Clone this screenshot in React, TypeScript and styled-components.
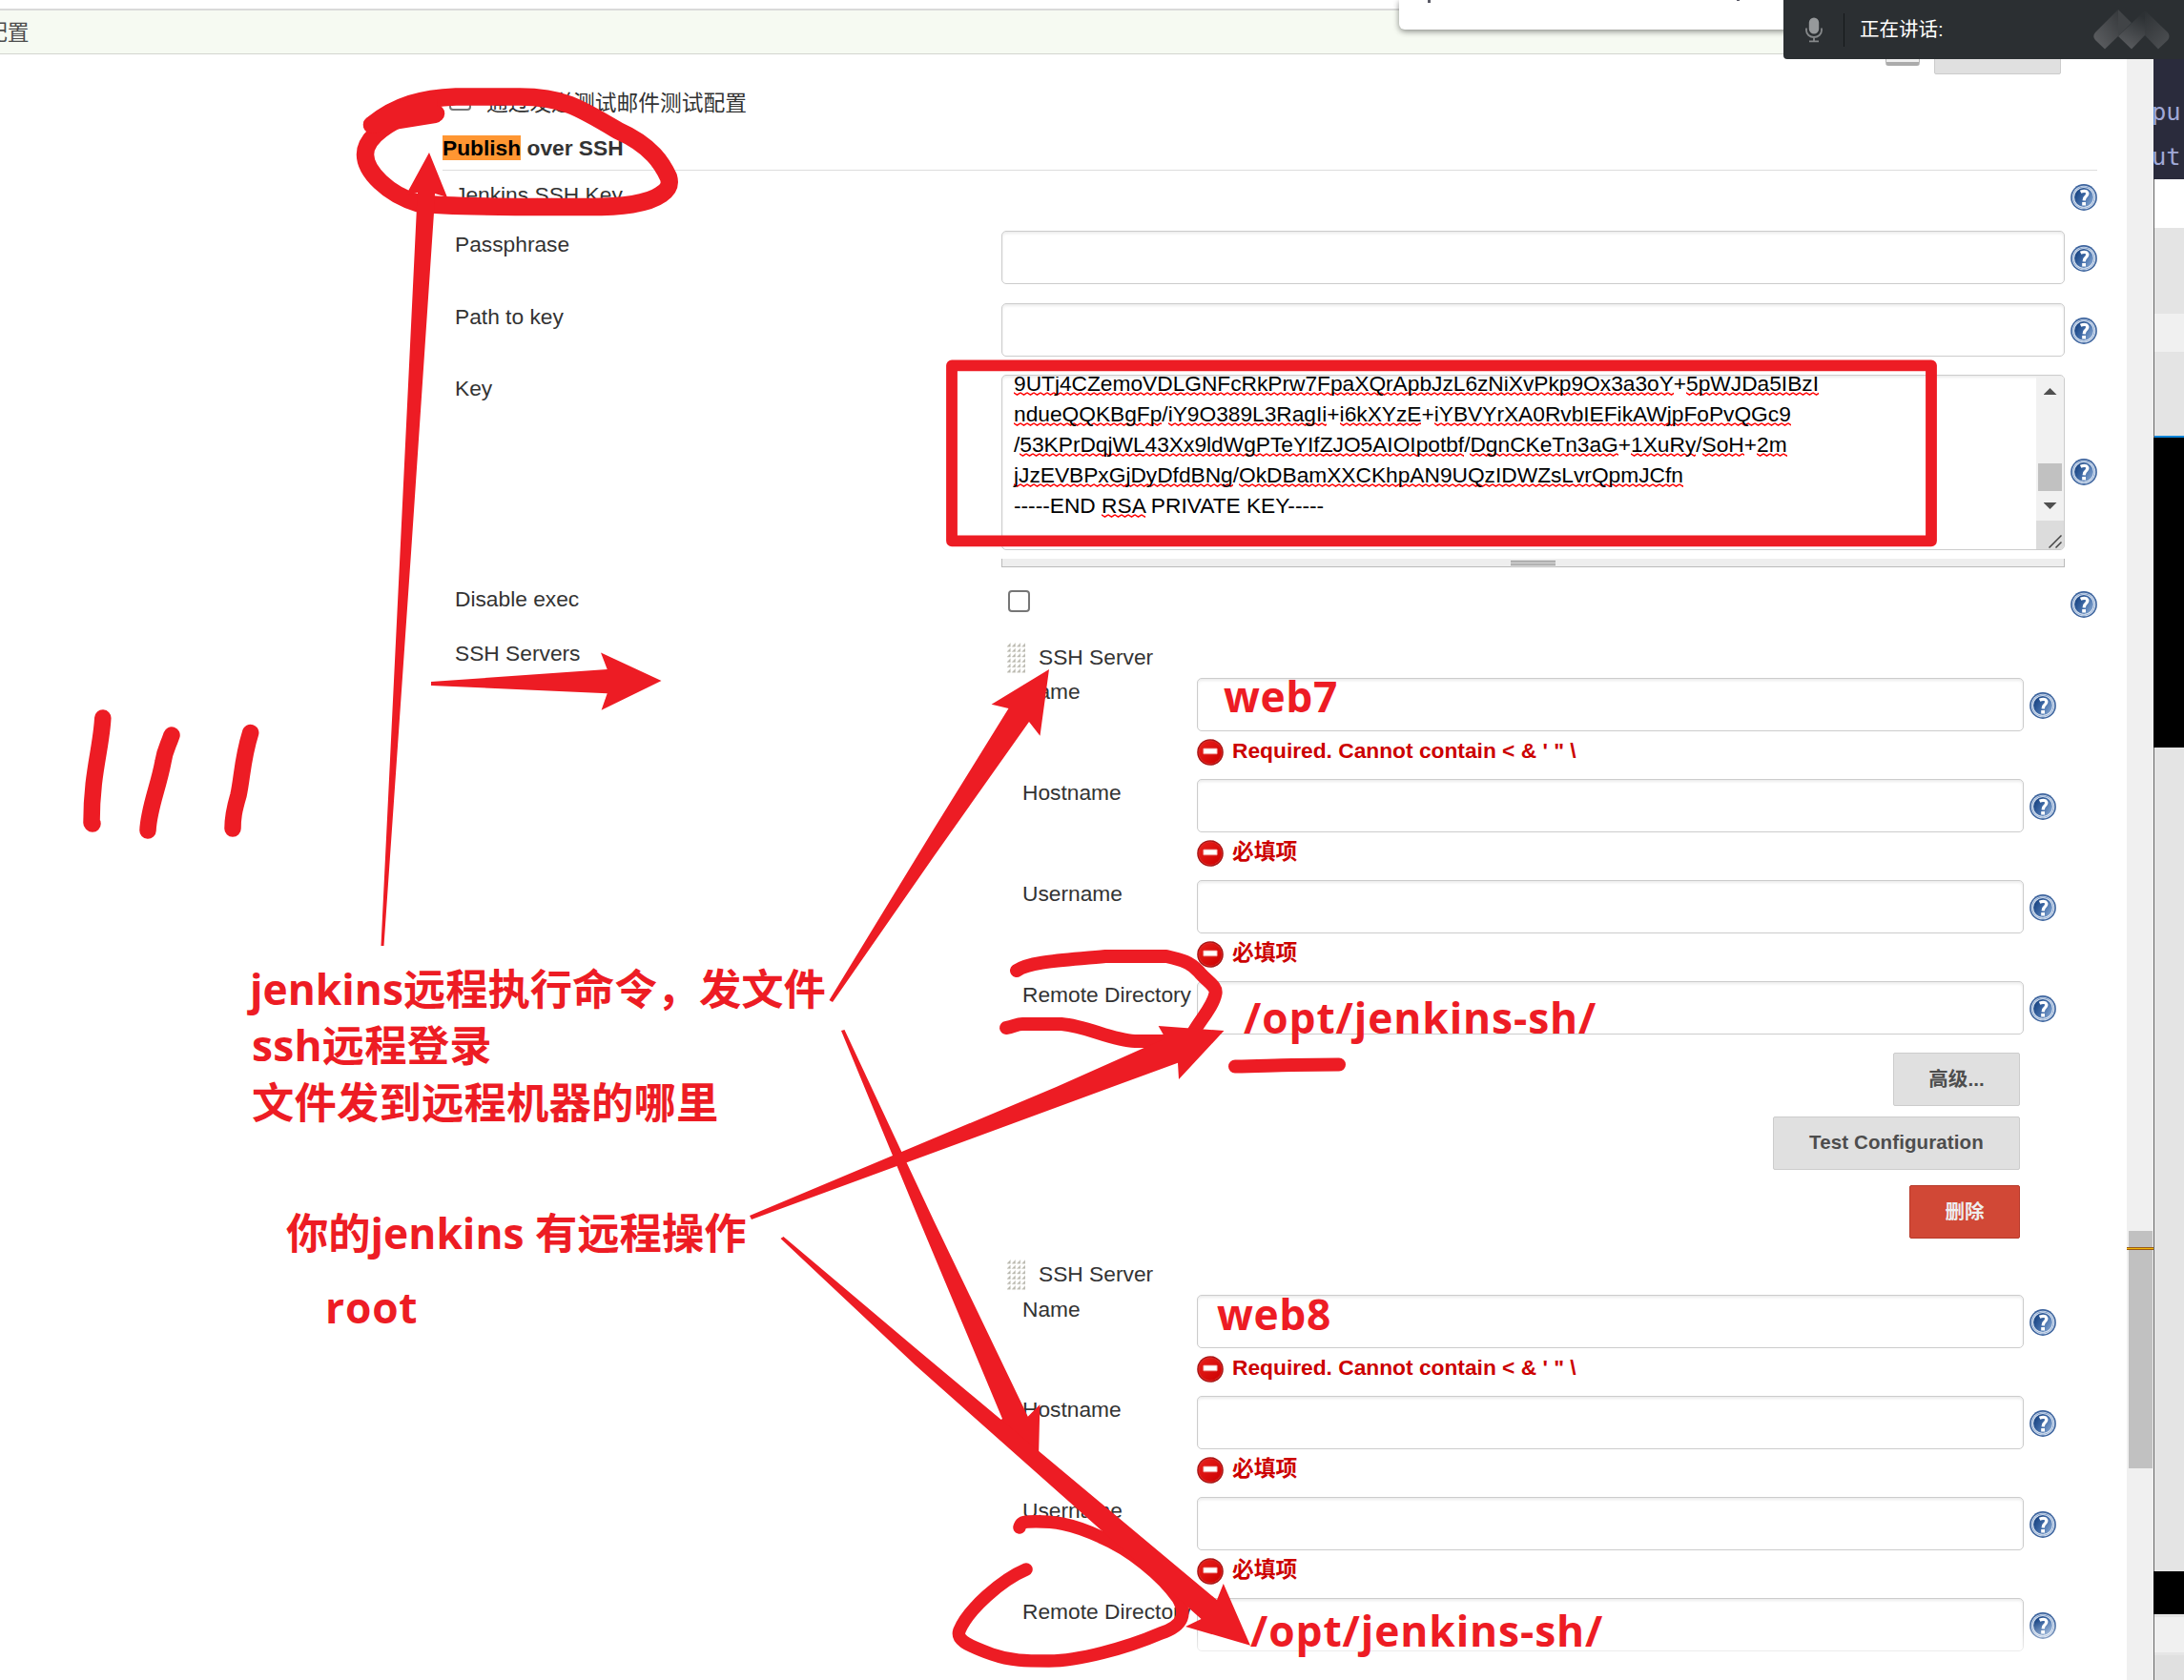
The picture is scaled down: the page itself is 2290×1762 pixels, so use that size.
import React from "react";
import styled, { createGlobalStyle } from "styled-components";

const RED = "#ed1c24";
const UI_FONT = `"Liberation Sans", "Noto Sans CJK SC", sans-serif`;
const NOTE_FONT = `"Open Sans", "Noto Sans CJK SC", sans-serif`;

const GlobalStyle = createGlobalStyle`
  * { box-sizing: border-box; }
  body { margin: 0; background: #fff; overflow: hidden; }
`;

const Screen = styled.div`
  position: relative;
  display: flex;
  width: 2290px;
  height: 1762px;
  overflow: hidden;
  background: #fff;
  color: #333;
  font: 22.75px/30px ${UI_FONT};
  white-space: nowrap;
`;

const Browser = styled.div`
  display: flex;
  flex-direction: column;
  width: 2258px;
  height: 1762px;
`;

const Breadcrumbs = styled.header`
  flex: none;
  height: 57px;
  border-top: 9px solid #fff;
  border-bottom: 1px solid #d3d6cf;
  background: #f6faf2;
  box-shadow: inset 0 2px 0 #d9dad9;
  color: #4d4d4d;
  line-height: 50px;
  text-indent: -15px;
`;

const Viewport = styled.div`
  display: flex;
  flex: 1;
  min-height: 0;
`;

const Form = styled.main`
  flex: 1;
  min-width: 0;
  padding: 0 31px 0 464px;
  overflow: hidden;
`;

const CutOffRow = styled.div`
  display: flex;
  justify-content: flex-end;
  gap: 15px;
  height: 21px;
  padding-right: 38px;
`;

const NotepadEdge = styled.span`
  width: 36px;
  height: 12px;
  border: 1px solid #b5b5b5;
  border-bottom: 4px solid #ababab;
  border-radius: 0 0 3px 3px;
  background: #eee;
`;

const CutOffButton = styled.span`
  width: 133px;
  border: 1px solid #ccc;
  border-radius: 0 0 2px 2px;
  background: #e0e0e0;
`;

const CheckRow = styled.div`
  display: flex;
  align-items: flex-start;
  gap: 16px;
  height: 32px;
  margin-top: 14px;
  padding: 1px 0 0 7px;
`;

const Checkbox = styled.span`
  flex: none;
  width: 23px;
  height: 23px;
  border: 2px solid #767676;
  border-radius: 4px;
  background: #fff;
`;

const SectionTitle = styled.h2`
  height: 41px;
  margin: 14px 0 0;
  border-bottom: 1px solid #ddd;
  font-size: 22.75px;
  font-weight: 700;
  line-height: 34px;
`;

const Found = styled.mark`
  background: #ff9632;
  color: #000;
`;

const Row = styled.div<{ $h: number; $top?: number }>`
  display: flex;
  height: ${(p) => p.$h}px;
  padding: ${(p) => p.$top ?? 0}px 0 0 13px;
`;

const Label = styled.span<{ $w: number; $up?: number }>`
  flex: none;
  width: ${(p) => p.$w}px;
  margin-top: ${(p) => -(p.$up ?? 0)}px;
`;

const HelpSlot = styled.span<{ $top: number }>`
  flex: none;
  height: 28px;
  margin: ${(p) => p.$top}px 0 0 6px;
`;

const Spacer = styled.span`
  flex: 1;
`;

const TextBox = styled.div<{ $w: number }>`
  flex: none;
  width: ${(p) => p.$w}px;
  height: 56px;
  border: 1px solid #ccc;
  border-radius: 5px;
  background: #fff;
  box-shadow: inset 0 2px 3px rgba(0, 0, 0, 0.08);
`;

const KeyField = styled.div`
  display: flex;
  flex-direction: column;
  gap: 9px;
  width: 1115px;
`;

const TextArea = styled.div`
  display: flex;
  height: 184px;
  border: 1px solid #ccc;
  border-radius: 5px;
  box-shadow: inset 0 2px 3px rgba(0, 0, 0, 0.08);
  overflow: hidden;
`;

const KeyText = styled.div`
  flex: 1;
  margin: 1px 0;
  padding-left: 12px;
  overflow: hidden;
  color: #000;
  letter-spacing: -0.02px;
  line-height: 32px;
`;

const KeyLine = styled.div`
  height: 32px;
  &:first-child {
    margin-top: -9px;
  }
`;

const WAVE = `url("data:image/svg+xml,%3Csvg xmlns='http://www.w3.org/2000/svg' width='7' height='4'%3E%3Cpath d='M-1.75 0.9L0 0.9L3.5 3.1L7 0.9' fill='none' stroke='%23f00' stroke-width='1.5'/%3E%3C/svg%3E")`;

const Misspelled = styled.span`
  background: ${WAVE} repeat-x 0 22px / 7px 4px;
`;

const InnerScroll = styled.div`
  display: flex;
  flex-direction: column;
  width: 29px;
  margin-top: 1px;
`;

const InnerTrack = styled.div`
  display: flex;
  flex-direction: column;
  align-items: center;
  height: 151px;
  padding-top: 12px;
  background: #f1f1f1;
`;

const ArrowMark = styled.span<{ $down?: boolean }>`
  width: 14px;
  height: 7px;
  background: #505050;
  clip-path: ${(p) => (p.$down ? "polygon(0 0, 100% 0, 50% 100%)" : "polygon(50% 0, 100% 100%, 0 100%)")};
`;

const InnerThumb = styled.span`
  width: 25px;
  height: 29px;
  margin: 72px 0 12px;
  background: #c1c1c1;
`;

const ResizeCorner = styled.div`
  display: flex;
  align-items: flex-end;
  justify-content: flex-end;
  flex: 1;
  padding: 0 2px 1px 0;
  background: #dcdcdc;
`;

const DragHandle = styled.div`
  display: flex;
  justify-content: center;
  height: 9px;
  padding: 2px 0 1px;
  border: 1px solid #bbb;
  border-top: 0;
  background: #eee;
`;

const DragGrip = styled.span`
  width: 47px;
  height: 5px;
  background: linear-gradient(#8a8a8a 0 1px, #e2e2e2 1px 2px, #a0a0a0 2px 3px, #e2e2e2 3px 4px, #8a8a8a 4px);
`;

const DisableCell = styled.span`
  padding: 6px 0 0 7px;
`;

const ServerList = styled.div`
  padding-top: 4px;
`;

const ServerBlock = styled.section`
  height: 647.3px;
`;

const ServerHead = styled.div`
  display: flex;
  gap: 14px;
  height: 37px;
  padding-left: 6px;
`;

const ServerRow = styled.div`
  display: flex;
  height: 105.85px;
  padding-left: 22px;
`;

const FieldStack = styled.div`
  display: flex;
  flex-direction: column;
  gap: 8px;
`;

const ErrorLine = styled.div`
  display: flex;
  gap: 9px;
  color: #c00;
  font-weight: 700;
  line-height: 24px;
`;

const Actions = styled.div`
  display: flex;
  flex-direction: column;
  align-items: flex-end;
  width: 1068px;
  margin-top: -30.7px;
`;

const Button = styled.button<{ $w: number; $gap?: number; $danger?: boolean; $cjk?: boolean }>`
  width: ${(p) => p.$w}px;
  height: 56px;
  margin: ${(p) => p.$gap ?? 0}px 0 0;
  padding: 0 0 ${(p) => (p.$cjk ? 0 : 1)}px;
  border: 1px solid ${(p) => (p.$danger ? "#b83a2a" : "#ccc")};
  border-radius: 2px;
  background: ${(p) => (p.$danger ? "#d14836" : "#e0e0e0")};
  color: ${(p) => (p.$danger ? "#eee" : "#4d4d4d")};
  font: 700 20.5px/30px ${UI_FONT};
  letter-spacing: 0.12px;
  white-space: nowrap;
`;

const PageScroll = styled.div`
  width: 28px;
  padding: 1234px 1px 0 2px;
  background: #f0f0f0;
`;

const PageThumb = styled.div`
  height: 249px;
  padding-top: 17px;
  background: #c1c1c1;
`;

const FindTick = styled.div`
  height: 3px;
  margin: 0 -1px 0 -2px;
  background: linear-gradient(#9a5a10 0 1px, #f2b90c 1px 2px, #9a5a10 2px);
`;

const SideStrip = styled.aside`
  display: flex;
  flex-direction: column;
  width: 32px;
  height: 1762px;
`;

const SidePart = styled.div<{ $h: number; $c: string; $edge?: boolean }>`
  flex: none;
  height: ${(p) => p.$h}px;
  border-left: ${(p) => (p.$edge === false ? "0" : "1px solid #666")};
  background: ${(p) => p.$c};
`;

const Terminal = styled.div`
  flex: none;
  height: 188px;
  padding-top: 94px;
  overflow: hidden;
  background: #2a2b3c;
  color: #a0a8d6;
  font: 25.5px/46.5px "DejaVu Sans Mono", monospace;
  text-indent: -2px;
`;

const Popup = styled.div`
  position: absolute;
  top: 0;
  left: 1467px;
  display: flex;
  gap: 321px;
  width: 420px;
  height: 31px;
  padding-left: 30px;
  border-radius: 0 0 6px 6px;
  background: #fff;
  box-shadow: 0 2px 6px rgba(0, 0, 0, 0.45);
`;

const TextRemnant = styled.span<{ $h: number }>`
  width: 3px;
  height: ${(p) => p.$h}px;
  background: #5a5a66;
`;

const MeetingBar = styled.div`
  position: absolute;
  top: 0;
  left: 1870px;
  display: flex;
  align-items: center;
  width: 420px;
  height: 62px;
  padding: 0 15px 0 23px;
  border-radius: 0 0 0 4px;
  background: #2b2f32;
  color: #fff;
  font-size: 20.5px;
`;

const BarDivider = styled.span`
  width: 1px;
  height: 35px;
  margin: 0 16px 0 22px;
  background: #15181a;
`;

const BottomFade = styled.div`
  position: absolute;
  left: 0;
  top: 1700px;
  width: 2230px;
  height: 62px;
  background: linear-gradient(rgba(255, 255, 255, 0), #fff 48px);
`;

const Note = styled.div<{ $x: number; $y: number; $ls?: number }>`
  position: absolute;
  left: ${(p) => p.$x}px;
  top: ${(p) => p.$y - 46.7}px;
  color: ${RED};
  font: 700 44.3px/59px ${NOTE_FONT};
  letter-spacing: ${(p) => p.$ls ?? 0}px;
  white-space: pre;
`;

const Ink = styled.svg`
  position: absolute;
  inset: 0;
`;

const HelpIcon = () => (
  <svg width="28" height="28" viewBox="0 0 28 28" style={{ display: "block" }}>
    <defs>
      <linearGradient id="helpFill" x1="0" y1="0.2" x2="1" y2="0.8">
        <stop offset="0.1" stopColor="#1d4886" />
        <stop offset="0.5" stopColor="#3f6aa6" />
        <stop offset="1" stopColor="#86a7d2" />
      </linearGradient>
    </defs>
    <circle cx="14" cy="14" r="13.9" fill="#3d649e" />
    <circle cx="14" cy="14" r="12.3" fill="#dbe5f2" />
    <circle cx="14" cy="14" r="11.4" fill="#6d8fc0" />
    <circle cx="14" cy="14" r="10.8" fill="#e3ebf5" />
    <circle cx="14" cy="14" r="9.9" fill="url(#helpFill)" />
    <path d="M10.6 8.3Q14.2 6.5 16.8 7.9Q18.8 9.6 17 12Q14.2 14.4 14.1 17.4" fill="none" stroke="#fff" strokeWidth="3.2" />
    <rect x="12.2" y="19" width="3.8" height="3.5" fill="#fff" />
  </svg>
);

const ErrorIcon = () => (
  <svg width="28" height="28" viewBox="0 0 28 28">
    <defs>
      <linearGradient id="errFill" x1="0" y1="0" x2="1" y2="1">
        <stop offset="0" stopColor="#e8201c" />
        <stop offset="1" stopColor="#cc0000" />
      </linearGradient>
    </defs>
    <circle cx="14" cy="14" r="13.8" fill="#a81414" />
    <circle cx="14" cy="14" r="12.4" fill="#e0302c" />
    <circle cx="14" cy="14" r="11.7" fill="url(#errFill)" />
    <rect x="6.8" y="10" width="14.4" height="5.8" rx="0.6" fill="#fff" stroke="#ee8a88" strokeWidth="0.8" />
  </svg>
);

const Grip = () => (
  <svg width="19" height="33" viewBox="0 0 19 33">
    {[0, 1, 2, 3, 4, 5].map((r) =>
      [0, 1, 2, 3].map((c) => (
        <path key={`${r}-${c}`} d={`M${c * 5.2} ${r * 5.4 + 4.2}h3.4v-3.6z`} fill="#b3b1a8" stroke="#d2d1ca" strokeWidth="0.6" />
      ))
    )}
  </svg>
);

const MicIcon = () => (
  <svg width="18" height="27" viewBox="0 0 18 27">
    <rect x="3.8" y="0.5" width="10.4" height="17" rx="5.2" fill="#96999b" />
    <path d="M1 11.5v2.5a8 7 0 0 0 16 0v-2.5M9 21v4M4 25.3h10" fill="none" stroke="#85888a" strokeWidth="1.8" />
  </svg>
);

const MeetingLogo = () => (
  <svg width="80" height="42" viewBox="0 0 80 42">
    <defs>
      <linearGradient id="lg1" x1="1" y1="0" x2="0.1" y2="1">
        <stop offset="0" stopColor="#36393c" />
        <stop offset="1" stopColor="#5e6063" />
      </linearGradient>
      <linearGradient id="lg2" x1="0.45" y1="0" x2="0.1" y2="1">
        <stop offset="0" stopColor="#2d3134" />
        <stop offset="1" stopColor="#5e6063" />
      </linearGradient>
      <linearGradient id="lg3" x1="0" y1="0" x2="0.6" y2="1">
        <stop offset="0" stopColor="#2d3134" />
        <stop offset="1" stopColor="#4a4d50" />
      </linearGradient>
    </defs>
    <path d="M26 0L2 24Q-1.500 28 2 32L12 41.500L26 28Z" fill="url(#lg1)" />
    <path d="M26 0L40 14L26 28Z" fill="#414447" />
    <path d="M54 1L26 28L40 41.500L54 27Z" fill="url(#lg2)" />
    <path d="M54 1L54 27L68 41.500L78 32Q81 28 78 24Z" fill="url(#lg3)" />
  </svg>
);

const Help = ({ top = 15 }: { top?: number }) => (
  <HelpSlot $top={top}>
    <HelpIcon />
  </HelpSlot>
);

const KEY_LINES = [
  "9UTj4CZemoVDLGNFcRkPrw7FpaXQrApbJzL6zNiXvPkp9Ox3a3oY+5pWJDa5IBzI",
  "ndueQQKBgFp/iY9O389L3RagIi+i6kXYzE+iYBVYrXA0RvbIEFikAWjpFoPvQGc9",
  "/53KPrDqjWL43Xx9ldWgPTeYIfZJO5AIOIpotbf/DgnCKeTn3aG+1XuRy/SoH+2m",
  "jJzEVBPxGjDyDfdBNg/OkDBamXXCKhpAN9UQzIDWZsLvrQpmJCfn",
];

const REQUIRED = "必填项";

const SERVER_FIELDS: [string, string | null][] = [
  ["Name", "Required. Cannot contain < & ' \" \\"],
  ["Hostname", REQUIRED],
  ["Username", REQUIRED],
  ["Remote Directory", null],
];

const Server = ({ actions }: { actions?: boolean }) => (
  <ServerBlock>
    <ServerHead>
      <Grip />
      <span>SSH Server</span>
    </ServerHead>
    {SERVER_FIELDS.map(([label, error]) => (
      <ServerRow key={label}>
        <Label $w={183} $up={0.8}>{label}</Label>
        <FieldStack>
          <TextBox $w={867} />
          {error && (
            <ErrorLine>
              <ErrorIcon />
              <span>{error}</span>
            </ErrorLine>
          )}
        </FieldStack>
        <Help />
      </ServerRow>
    ))}
    {actions && (
      <Actions>
        <Button $w={133} $cjk>高级...</Button>
        <Button $w={259} $gap={11}>Test Configuration</Button>
        <Button $w={116} $gap={16} $danger $cjk>删除</Button>
      </Actions>
    )}
  </ServerBlock>
);

const INK_STROKES: { d: string; w: number }[] = [
  { d: "M457 119L433 118C411 127 383 142 383 162C383 180 407 204 438 213C474 218 563 217 617 217C652 217 679 214 693 204C702 198 703 193 701 186C695 173 684 153 648 137C608 113 590 101.500 545 101.500L478 101.500C443 103 416 110 390 131", w: 18.5 },
  { d: "M456 120L400 129L390 131L412 117L450 108", w: 18 },
  { d: "M107.800 753C106 786 96 811 96 863L97 864", w: 17.5 },
  { d: "M180 771C176 783 173 786 171 799C166 826 156 848 155 871", w: 17.5 },
  { d: "M262.700 768.500C254 796 254 816 250 834C245 851 244 858 244 869", w: 17.5 },
  { d: "M1066 1018C1080 1008 1120 1007 1159 1003L1223 1003C1240 1007 1248 1009 1257 1019C1266 1030 1276 1034 1274.500 1042C1272 1056 1258 1070 1250 1085", w: 14 },
  { d: "M1055 1078C1063 1077 1066 1074 1072 1074L1113 1074C1140 1076 1165 1091 1190 1092L1235 1092", w: 14 },
  { d: "M1295 1118.500C1320 1118.500 1335 1117 1355 1117L1404 1116.500", w: 14 },
  { d: "M1069 1602C1070 1598 1072 1596 1078 1596C1105 1595 1124 1598 1154 1612C1185 1625 1218 1652 1235 1676C1244 1692 1242 1705 1217 1713C1180 1729 1130 1742 1100 1742C1075 1742 1060 1742 1040 1735C1010 1724 1003 1719 1006 1710C1015 1688 1050 1657 1076 1646", w: 13.5 },
];

const INK_ARROWS = [
  "450,160 469,207 456,203 455,223 431,580 402.500,992 399.500,992 419.500,580 437,217 438,202 426,204",
  "452,715 636.700,702 630,684.600 693.500,714 630.600,744.700 636.700,727.200 452,719",
  "869.500,1049 980,868 1057.500,743 1039.600,738.700 1100,702 1090.500,771.700 1079,757 980,897 873,1051",
  "882,1081 964,1280 1051,1488 1036.600,1498 1089,1529 1090.400,1473 1077.800,1485.700 979,1280 885.500,1080",
  "786,1275 1107.500,1140 1222,1089 1214.600,1076 1283.400,1081 1236,1132 1235,1114.700 1166,1140 788,1279",
  "818.500,1299 960,1432 1259.500,1698 1243,1706 1311,1725.700 1282.800,1661 1276,1678 960,1414 821.500,1297",
];

export default function App() {
  return (
    <Screen>
      <GlobalStyle />
      <Browser>
        <Breadcrumbs>配置</Breadcrumbs>
        <Viewport>
          <Form>
            <CutOffRow>
              <NotepadEdge />
              <CutOffButton />
            </CutOffRow>
            <CheckRow>
              <Checkbox />
              <span>通过发送测试邮件测试配置</span>
            </CheckRow>
            <SectionTitle>
              <Found>Publish</Found> over SSH
            </SectionTitle>
            <Row $h={63} $top={11}>
              <Label $w={573} $up={1}>Jenkins SSH Key</Label>
              <Spacer />
              <Help top={3} />
            </Row>
            <Row $h={76}>
              <Label $w={573} $up={1}>Passphrase</Label>
              <TextBox $w={1115} />
              <Help />
            </Row>
            <Row $h={75}>
              <Label $w={573} $up={1}>Path to key</Label>
              <TextBox $w={1115} />
              <Help />
            </Row>
            <Row $h={220}>
              <Label $w={573} $up={1}>Key</Label>
              <KeyField>
                <TextArea>
                  <KeyText>
                    {KEY_LINES.map((line) => (
                      <KeyLine key={line}>
                        {line.split(/([/+])/).map((part, i) =>
                          part.length > 1 ? <Misspelled key={i}>{part}</Misspelled> : part
                        )}
                      </KeyLine>
                    ))}
                    <KeyLine>
                      -----END <Misspelled>RSA</Misspelled> PRIVATE KEY-----
                    </KeyLine>
                  </KeyText>
                  <InnerScroll>
                    <InnerTrack>
                      <ArrowMark />
                      <InnerThumb />
                      <ArrowMark $down />
                    </InnerTrack>
                    <ResizeCorner>
                      <svg width="14" height="14" viewBox="0 0 14 14">
                        <path d="M0.500 13.500L13.500 0.500M7.500 13.500L13.500 7.500" stroke="#444" strokeWidth="1.500" />
                      </svg>
                    </ResizeCorner>
                  </InnerScroll>
                </TextArea>
                <DragHandle>
                  <DragGrip />
                </DragHandle>
              </KeyField>
              <Help top={88} />
            </Row>
            <Row $h={57}>
              <Label $w={573}>Disable exec</Label>
              <DisableCell>
                <Checkbox as="div" />
              </DisableCell>
              <Spacer />
              <Help top={7} />
            </Row>
            <Row $h={1300}>
              <Label $w={573}>SSH Servers</Label>
              <ServerList>
                <Server actions />
                <Server />
              </ServerList>
            </Row>
          </Form>
          <PageScroll>
            <PageThumb>
              <FindTick />
            </PageThumb>
          </PageScroll>
        </Viewport>
      </Browser>
      <SideStrip>
        <Terminal>
          <div>pu</div>
          <div>ut</div>
        </Terminal>
        <SidePart $h={51} $c="#fff" />
        <SidePart $h={90} $c="#e4e4e4" />
        <SidePart $h={40} $c="#f0f0f0" />
        <SidePart $h={88} $c="#e4e4e4" />
        <SidePart $h={2} $c="#0a84d8" />
        <SidePart $h={325} $c="#000" $edge={false} />
        <SidePart $h={864} $c="#e4e4e4" />
        <SidePart $h={45} $c="#000" $edge={false} />
        <SidePart $h={3} $c="#e4e4e4" />
        <SidePart $h={37} $c="#f0f0f0" />
        <SidePart $h={3} $c="#e6e6e6" />
        <SidePart $h={26} $c="#e0e0e0" />
      </SideStrip>

      <BottomFade />
      <Popup>
        <TextRemnant $h={3} />
        <TextRemnant $h={1} />
      </Popup>
      <MeetingBar>
        <MicIcon />
        <BarDivider />
        <span>正在讲话:</span>
        <Spacer />
        <MeetingLogo />
      </MeetingBar>

      <Ink width="2290" height="1762" viewBox="0 0 2290 1762">
        <g fill="none" stroke={RED} strokeLinecap="round" strokeLinejoin="round">
          {INK_STROKES.map((s) => (
            <path key={s.d} d={s.d} strokeWidth={s.w} />
          ))}
          <rect x="998" y="383.300" width="1027" height="184" strokeWidth="11.800" />
        </g>
        <g fill={RED}>
          {INK_ARROWS.map((points) => (
            <polygon key={points} points={points} />
          ))}
        </g>
      </Ink>
      <Note $x={262} $y={1054.7}>jenkins远程执行命令，发文件</Note>
      <Note $x={264} $y={1113.7} $ls={0.2}>ssh远程登录</Note>
      <Note $x={264} $y={1173.2} $ls={0.2}>文件发到远程机器的哪里</Note>
      <Note $x={300} $y={1310.7}>你的jenkins 有远程操作</Note>
      <Note $x={341} $y={1388.7} $ls={0.8}>root</Note>
      <Note $x={1283} $y={747.7} $ls={0.6}>web7</Note>
      <Note $x={1276} $y={1395.2} $ls={0.6}>web8</Note>
      <Note $x={1304} $y={1084.7} $ls={0.9}>/opt/jenkins-sh/</Note>
      <Note $x={1311} $y={1727.7} $ls={0.9}>/opt/jenkins-sh/</Note>
    </Screen>
  );
}
